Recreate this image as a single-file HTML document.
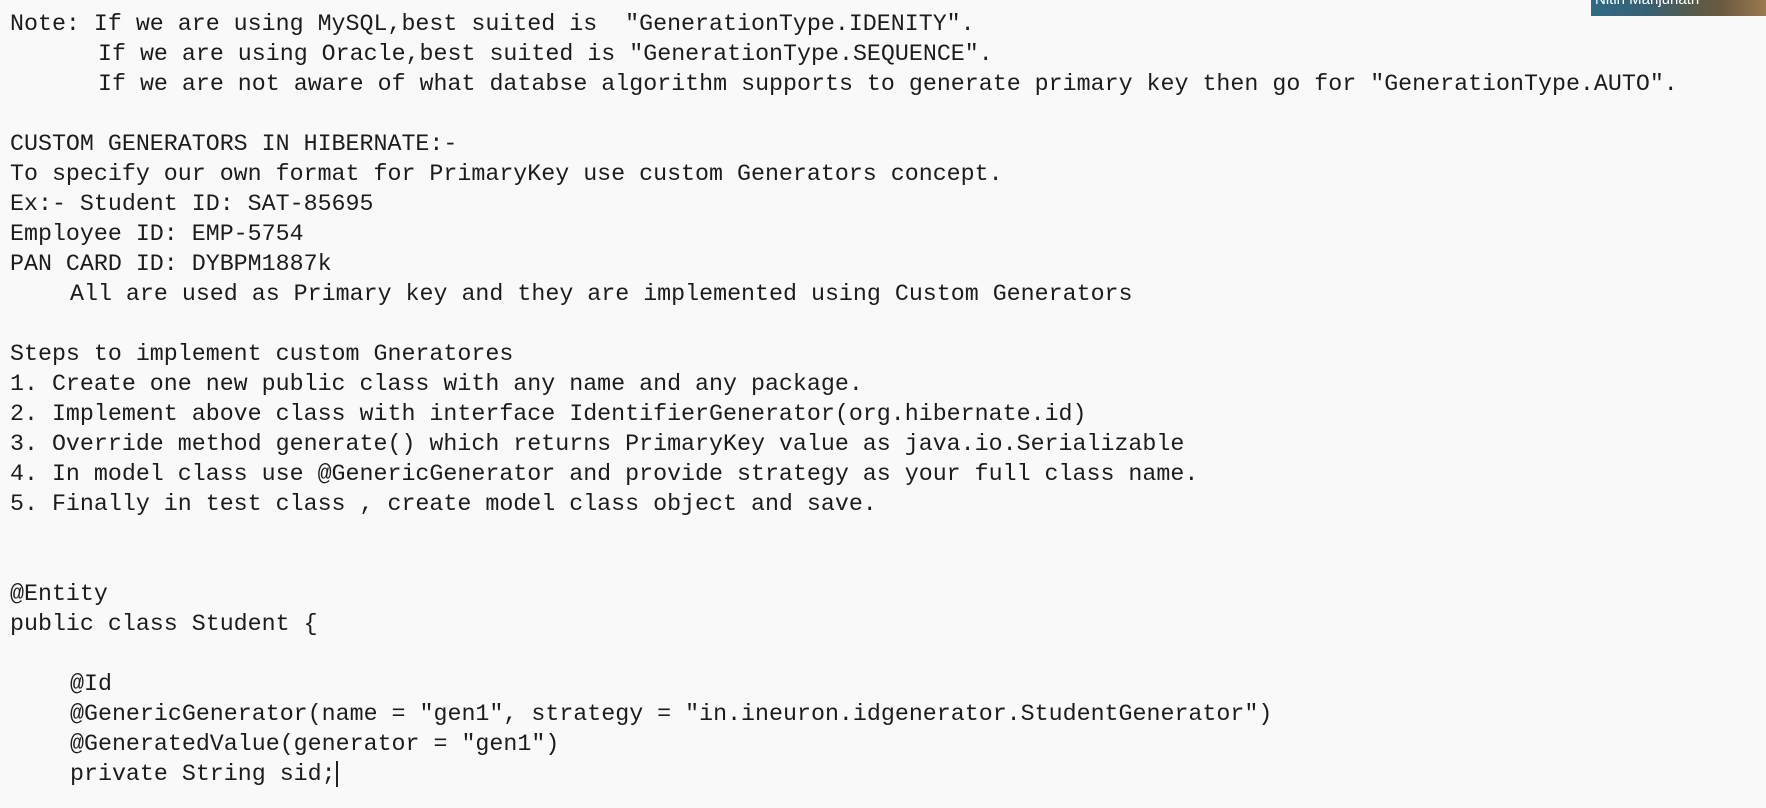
<!DOCTYPE html>
<html><head><meta charset="utf-8"><style>
html,body{margin:0;padding:0;background:#f9f9f9;width:1766px;height:808px;overflow:hidden}
.t{position:absolute;left:10px;top:9px;font-family:"Liberation Mono",monospace;font-size:23.3px;line-height:30px;color:#1c1c1c;white-space:pre}
.t div{height:30px}
.i6{padding-left:88px}.i4{padding-left:60px}
.cam{position:absolute;left:1591px;top:0;width:175px;height:16px;background:linear-gradient(90deg,#2e6b86 0%,#3a5f70 35%,#5a5a48 60%,#6b5a40 75%,#9a7a50 100%)}
.cam span{position:absolute;left:4px;top:-9px;color:#fff;font:15px "Liberation Sans",sans-serif}
.cur{display:inline-block;width:2px;height:26px;background:#222;vertical-align:middle}
</style></head><body>
<div class="cam"><span>Nitin Manjunath</span></div>
<div class="t"><div>Note: If we are using MySQL,best suited is  "GenerationType.IDENITY".</div><div class="i6">If we are using Oracle,best suited is "GenerationType.SEQUENCE".</div><div class="i6">If we are not aware of what databse algorithm supports to generate primary key then go for "GenerationType.AUTO".</div><div></div><div>CUSTOM GENERATORS IN HIBERNATE:-</div><div>To specify our own format for PrimaryKey use custom Generators concept.</div><div>Ex:- Student ID: SAT-85695</div><div>Employee ID: EMP-5754</div><div>PAN CARD ID: DYBPM1887k</div><div class="i4">All are used as Primary key and they are implemented using Custom Generators</div><div></div><div>Steps to implement custom Gneratores</div><div>1. Create one new public class with any name and any package.</div><div>2. Implement above class with interface IdentifierGenerator(org.hibernate.id)</div><div>3. Override method generate() which returns PrimaryKey value as java.io.Serializable</div><div>4. In model class use @GenericGenerator and provide strategy as your full class name.</div><div>5. Finally in test class , create model class object and save.</div><div></div><div></div><div>@Entity</div><div>public class Student {</div><div></div><div class="i4">@Id</div><div class="i4">@GenericGenerator(name = "gen1", strategy = "in.ineuron.idgenerator.StudentGenerator")</div><div class="i4">@GeneratedValue(generator = "gen1")</div><div class="i4">private String sid;<span class="cur"></span></div></div>
</body></html>
